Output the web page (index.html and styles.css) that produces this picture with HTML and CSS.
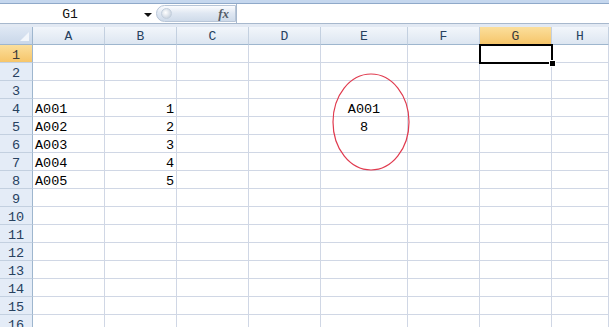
FILE: index.html
```html
<!DOCTYPE html>
<html lang="zh">
<head>
    <meta charset="UTF-8">
    <title>Sheet1</title>
    <link rel="stylesheet" href="styles.css">
</head>
<body>
    <div class="topbar"></div>
    <div class="formula-row">
        <div class="namebox">
            <span class="cellname">G1</span>
            <span class="arrow"></span>
        </div>
        <div class="fxbtn">
            <span class="knob"></span>
            <span class="fx">fx</span>
        </div>
        <div class="formula"></div>
    </div>
    <div class="strip"></div>

    <div class="sheet" id="sheet">
        <div class="corner"><span class="tri"></span></div>
        <div class="colhead">A</div>
        <div class="colhead">B</div>
        <div class="colhead">C</div>
        <div class="colhead">D</div>
        <div class="colhead">E</div>
        <div class="colhead">F</div>
        <div class="colhead sel">G</div>
        <div class="colhead">H</div>
    </div>

    <script>
        let data = {
            4: { A: "A001", B: "1", E: "A001" },
            5: { A: "A002", B: "2", E: "8" },
            6: { A: "A003", B: "3" },
            7: { A: "A004", B: "4" },
            8: { A: "A005", B: "5" }
        };
        let cols = ["A", "B", "C", "D", "E", "F", "G", "H"];
        let sheet = document.getElementById("sheet");

        for (let r = 1; r <= 16; r++) {
            let html = `<div class="rowhead${r === 1 ? " sel" : ""}">${r}</div>`;
            cols.forEach(c => {
                let v = (data[r] && data[r][c]) || "";
                let cls = "cell";
                if (c === "B") cls += " num";
                if (c === "E") cls += " mid";
                html += `<div class="${cls}">${v}</div>`;
            });
            sheet.innerHTML += html;
        }

        sheet.innerHTML += `<div class="selbox"><span class="handle"></span></div>`;
        sheet.innerHTML += `<svg class="circle" width="80" height="100" viewBox="0 0 80 100">
            <ellipse cx="39" cy="49" rx="38" ry="48" fill="none" stroke="#e03a4e" stroke-width="1.2"/>
        </svg>`;
    </script>
</body>
</html>
```

FILE: styles.css
```css
body {
    margin: 0;
    width: 609px;
    height: 327px;
    overflow: hidden;
    background-color: white;
    font-family: "Liberation Mono", monospace;
}
.topbar {
    height: 3px;
    background-color: #c5d7ee;
    border-bottom: 1px solid #8fa9c9;
}
.formula-row {
    display: flex;
    height: 19px;
    border-bottom: 1px solid #a7b8cd;
    background-color: white;
}
.namebox {
    width: 156px;
    display: flex;
    align-items: center;
}
.cellname {
    width: 140px;
    text-align: center;
    font-size: 13px;
    padding-top: 1px;
    color: #111;
}
.arrow {
    width: 0;
    height: 0;
    margin-left: 4px;
    margin-top: 2px;
    border-left: 4px solid transparent;
    border-right: 4px solid transparent;
    border-top: 4px solid #111;
}
.fxbtn {
    width: 80px;
    margin: 1px 0;
    border: 1px solid #b7c5d7;
    border-radius: 9px 0 0 9px;
    background: linear-gradient(#fbfcfe, #dfe7f2 50%, #cfdbea);
    display: flex;
    align-items: center;
    justify-content: space-between;
    padding: 0 6px 0 4px;
    box-sizing: border-box;
}
.knob {
    width: 9px;
    height: 9px;
    border-radius: 50%;
    background: radial-gradient(circle at 40% 40%, #ffffff, #b9c6d6);
    border: 1px solid #c3cfdd;
}
.fx {
    font-family: "Liberation Serif", serif;
    font-style: italic;
    font-weight: bold;
    font-size: 13px;
    color: #555d68;
}
.formula {
    flex: 1;
    border-left: 1px solid #a7b8cd;
}
.strip {
    height: 3px;
    background-color: #e2e9f3;
}
.sheet {
    position: relative;
    display: grid;
    grid-template-columns: 33px 72px 72px 72px 72px 87px 72px 72px 57px;
    grid-auto-rows: 18px;
}
.corner {
    background: linear-gradient(#dfe8f4, #c9d7e9);
    border-right: 1px solid #9eb6ce;
    border-bottom: 1px solid #9eb6ce;
    position: relative;
}
.tri {
    position: absolute;
    right: 3px;
    bottom: 3px;
    width: 0;
    height: 0;
    border-left: 9px solid transparent;
    border-bottom: 9px solid #f2f6fb;
}
.colhead {
    background: linear-gradient(#f2f6fb, #dde6f1);
    border-right: 1px solid #c3d0e0;
    border-bottom: 1px solid #9eb6ce;
    text-align: center;
    font-size: 13px;
    line-height: 15px;
    padding-top: 2px;
    color: #27415f;
}
.colhead.sel {
    background: linear-gradient(#fbdf9c, #f6c56a);
    border-bottom-color: #f0b64a;
    color: #3b3b3b;
}
.rowhead {
    background-color: #e4ecf7;
    border-right: 1px solid #9eb6ce;
    border-bottom: 1px solid #c3d0e0;
    text-align: center;
    font-size: 13.5px;
    line-height: 15px;
    padding-top: 3px;
    color: #27415f;
}
.rowhead.sel {
    background: linear-gradient(#fbdf9c, #f6c56a);
    color: #3b3b3b;
}
.cell {
    border-right: 1px solid #d0d7e5;
    border-bottom: 1px solid #d0d7e5;
    font-size: 13.5px;
    line-height: 15px;
    padding: 3px 2px 0;
    color: #000;
    white-space: nowrap;
}
.cell.num {
    text-align: right;
}
.cell.mid {
    text-align: center;
}
.selbox {
    position: absolute;
    left: 479px;
    top: 17px;
    width: 70px;
    height: 16px;
    border: 2px solid #000;
}
.handle {
    position: absolute;
    right: -5px;
    bottom: -5px;
    width: 5px;
    height: 5px;
    background-color: #000;
    border: 1px solid #fff;
}
.circle {
    position: absolute;
    left: 332px;
    top: 46px;
}
```
